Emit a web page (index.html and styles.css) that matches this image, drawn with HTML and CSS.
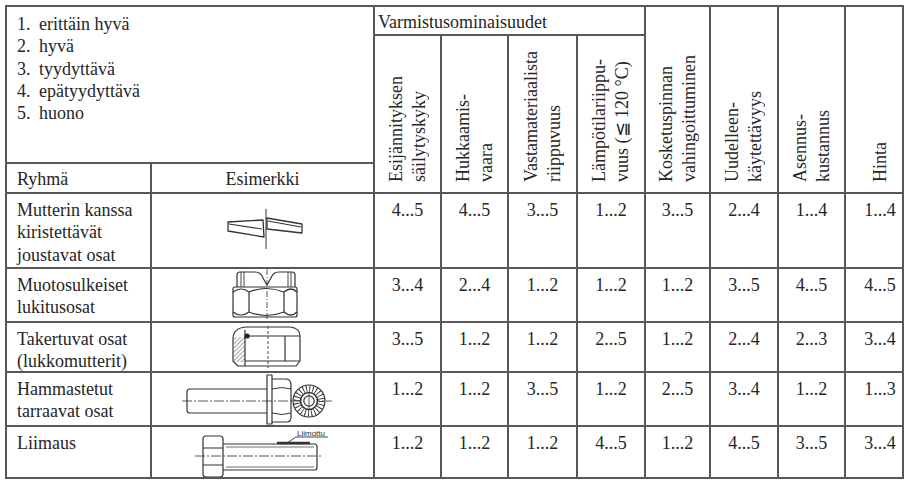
FILE: index.html
```html
<!DOCTYPE html>
<html lang="fi">
<head>
<meta charset="utf-8">
<title>Varmistusominaisuudet</title>
<link rel="stylesheet" href="styles.css">
</head>
<body>
<div class="sheet">
  <div class="cell legend">
    <div><span class="num">1.</span>erittäin hyvä</div>
    <div><span class="num">2.</span>hyvä</div>
    <div><span class="num">3.</span>tyydyttävä</div>
    <div><span class="num">4.</span>epätyydyttävä</div>
    <div><span class="num">5.</span>huono</div>
  </div>
  <div class="cell group">Varmistusominaisuudet</div>
  <div class="cell vh vh-a c3"><span class="rot">Esijännityksen<br>säilytyskyky</span></div>
  <div class="cell vh vh-a c4"><span class="rot">Hukkaamis-<br>vaara</span></div>
  <div class="cell vh vh-a c5"><span class="rot">Vastamateriaalista<br>riippuvuus</span></div>
  <div class="cell vh vh-a c6"><span class="rot">Lämpötilariippu-<br>vuus (≦ 120 °C)</span></div>
  <div class="cell vh vh-b c7"><span class="rot">Kosketuspinnan<br>vahingoittuminen</span></div>
  <div class="cell vh vh-b c8"><span class="rot">Uudelleen-<br>käytettävyys</span></div>
  <div class="cell vh vh-b c9"><span class="rot">Asennus-<br>kustannus</span></div>
  <div class="cell vh vh-b c10 last"><span class="rot">Hinta</span></div>
  <div class="cell head-ryhma">Ryhmä</div>
  <div class="cell head-esim">Esimerkki</div>

  <!-- Row 1 -->
  <div class="cell name">Mutterin kanssa<br>kiristettävät<br>joustavat osat</div>
  <div class="cell ex">
    <svg viewBox="152 194 221 73" preserveAspectRatio="none">
      <g fill="none" stroke="#333" stroke-width="1.3" stroke-linejoin="round">
        <path d="M228,222 L263,220 L264,237 L228,231 Z"/>
        <path d="M229,224 L262,229" stroke-width="1.1"/>
        <path d="M267,218 L302,224 L302,233 L267,229 Z"/>
        <path d="M268,221 L301,227" stroke-width="1.1"/>
        <path d="M266,209 V249" stroke-width="1"/>
      </g>
    </svg>
  </div>
  <div class="cell val">4...5</div>
  <div class="cell val">4...5</div>
  <div class="cell val">3...5</div>
  <div class="cell val">1...2</div>
  <div class="cell val">3...5</div>
  <div class="cell val">2...4</div>
  <div class="cell val">1...4</div>
  <div class="cell val last">1...4</div>

  <!-- Row 2 -->
  <div class="cell name">Muotosulkeiset<br>lukitusosat</div>
  <div class="cell ex">
    <svg viewBox="152 269 221 52" preserveAspectRatio="none">
      <g fill="none" stroke="#333" stroke-width="1.2" stroke-linejoin="round">
        <path d="M237,287 L237,275 Q237,272 240,272 L255,272 Q261,272 263,278 L267,285 L271,278 Q273,272 279,272 L292,272 Q295,272 295,275 L295,287"/>
        <path d="M241,272 V287 M244,272 V287 M288,272 V287 M291,272 V287" stroke-width="0.9"/>
        <path d="M233,289 Q233,287 235,287 L295,287 Q297,287 297,289 L297,315 Q297,317 295,317 L235,317 Q233,317 233,315 Z"/>
        <path d="M233,292 Q241,286 249,292 Q266,285 284,292 Q291,286 297,292 M233,312 Q241,318 249,312 Q266,319 284,312 Q291,318 297,312 M249,292 V312 M284,292 V312"/>
        <path d="M267,269 V321" stroke-width="0.8" stroke-dasharray="6 2 1 2"/>
      </g>
    </svg>
  </div>
  <div class="cell val">3...4</div>
  <div class="cell val">2...4</div>
  <div class="cell val">1...2</div>
  <div class="cell val">1...2</div>
  <div class="cell val">1...2</div>
  <div class="cell val">3...5</div>
  <div class="cell val">4...5</div>
  <div class="cell val last">4...5</div>

  <!-- Row 3 -->
  <div class="cell name">Takertuvat osat<br>(lukkomutterit)</div>
  <div class="cell ex">
    <svg viewBox="152 323 221 48" preserveAspectRatio="none">
      <defs>
        <pattern id="hatch" width="3" height="3" patternUnits="userSpaceOnUse" patternTransform="rotate(45)">
          <line x1="0" y1="0" x2="0" y2="3" stroke="#333" stroke-width="0.9"/>
        </pattern>
      </defs>
      <rect x="234" y="337" width="11" height="25" fill="url(#hatch)"/>
      <g fill="none" stroke="#333" stroke-width="1.2" stroke-linejoin="round">
        <path d="M238,366 L233,361 L233,339 Q233,328 246,327 L290,327 Q300,328 300,336 L300,361 L296,366 Z"/>
        <path d="M245,336 H300 M245,330 V366 M245,361 H300 M285,336 V361"/>
        <path d="M268,326 V368" stroke-width="0.9" stroke-dasharray="3 2"/>
      </g>
      <circle cx="247" cy="336" r="2.6" fill="#222"/>
    </svg>
  </div>
  <div class="cell val">3...5</div>
  <div class="cell val">1...2</div>
  <div class="cell val">1...2</div>
  <div class="cell val">2...5</div>
  <div class="cell val">1...2</div>
  <div class="cell val">2...4</div>
  <div class="cell val">2...3</div>
  <div class="cell val last">3...4</div>

  <!-- Row 4 -->
  <div class="cell name">Hammastetut<br>tarraavat osat</div>
  <div class="cell ex">
    <svg viewBox="152 373 221 52" preserveAspectRatio="none">
      <g fill="none" stroke="#333" stroke-width="1.2" stroke-linejoin="round">
        <path d="M267,389 H190 Q187,389 187,392 V410 Q187,413 190,413 H267"/>
        <path d="M267,375 H272 V424 H267 Z"/>
        <path d="M272,379 H287 Q291,380 291,385 V417 Q291,422 287,422 H272"/>
        <path d="M272,389 Q282,386 291,389 M272,413 Q282,416 291,413" stroke-width="1"/>
        <path d="M182,401 H332" stroke-width="0.8" stroke-dasharray="10 2 2 2"/>
        <circle cx="309" cy="401" r="16"/>
        <circle cx="309" cy="401" r="12.3" stroke-width="6.4" stroke-dasharray="0.9 2.32"/>
        <circle cx="309" cy="401" r="8.5" stroke-width="1.6" fill="#fff"/>
        <circle cx="309" cy="401" r="5.2"/>
        <path d="M309,393 V409" stroke-width="0.8"/>
      </g>
    </svg>
  </div>
  <div class="cell val">1...2</div>
  <div class="cell val">1...2</div>
  <div class="cell val">3...5</div>
  <div class="cell val">1...2</div>
  <div class="cell val">2...5</div>
  <div class="cell val">3...4</div>
  <div class="cell val">1...2</div>
  <div class="cell val last">1...3</div>

  <!-- Row 5 -->
  <div class="cell name">Liimaus</div>
  <div class="cell ex">
    <svg viewBox="152 427 221 50" preserveAspectRatio="none">
      <g fill="none" stroke="#333" stroke-width="1.2" stroke-linejoin="round">
        <path d="M206,436 H220 Q223,436 223,439 V474 Q223,477 220,477 H206 Q203,477 203,474 V439 Q203,436 206,436 Z"/>
        <path d="M203,448 H223 M203,465 H223"/>
        <path d="M223,444 H315 Q317,444 317,447 V467 Q317,470 315,470 H223"/>
        <path d="M226,447 H314 M226,467 H314" stroke-width="0.7"/>
        <path d="M277,443 H310" stroke-width="2.4"/>
        <path d="M195,456 H322" stroke-width="0.8" stroke-dasharray="10 2 2 2"/>
        <path d="M296,437 H328 M296,437 L287,443" stroke-width="0.9"/>
      </g>
      <text x="297" y="435.5" class="tag">Liimottu</text>
    </svg>
  </div>
  <div class="cell val">1...2</div>
  <div class="cell val">1...2</div>
  <div class="cell val">1...2</div>
  <div class="cell val">4...5</div>
  <div class="cell val">1...2</div>
  <div class="cell val">4...5</div>
  <div class="cell val">3...5</div>
  <div class="cell val last">3...4</div>
</div>
</body>
</html>
```

FILE: styles.css
```css
* {
  box-sizing: border-box;
}

body {
  margin: 0;
  background: #fff;
  color: #262626;
  font-family: "Liberation Serif", serif;
}

.sheet {
  display: grid;
  grid-template-columns: 143px 221px 65px 65px 67px 66px 63px 66px 65px 56px;
  grid-template-rows: 27px 126px 28px 73px 52px 48px 52px 50px;
  gap: 2px;
  padding: 2px;
  margin: 5px 0 0 5px;
  width: max-content;
  background: #575757;
  font-family: "Liberation Serif", serif;
  font-size: 18px;
  line-height: 22.3px;
}

.cell {
  background: #fff;
  overflow: hidden;
}

.legend {
  grid-column: 1 / 3;
  grid-row: 1 / 3;
  padding: 6px 10px;
}

.legend .num {
  display: inline-block;
  width: 22px;
}

.group {
  grid-column: 3 / 7;
  grid-row: 1;
  padding: 4px 3px 0;
  line-height: 22px;
  white-space: nowrap;
}

.vh {
  display: flex;
  justify-content: center;
  align-items: flex-end;
  padding-bottom: 10px;
}

.vh-a { grid-row: 2 / 4; }
.vh-b { grid-row: 1 / 4; }

.c3 { grid-column: 3; }
.c4 { grid-column: 4; }
.c5 { grid-column: 5; }
.c6 { grid-column: 6; }
.c7 { grid-column: 7; }
.c8 { grid-column: 8; }
.c9 { grid-column: 9; }
.c10 { grid-column: 10; }

.rot {
  writing-mode: vertical-rl;
  transform: rotate(180deg);
  line-height: 23px;
  white-space: nowrap;
}

.head-ryhma {
  grid-column: 1;
  grid-row: 3;
  padding: 4px 10px 0;
}

.head-esim {
  grid-column: 2;
  grid-row: 3;
  padding-top: 4px;
  text-align: center;
}

.name {
  padding: 5px 10px 0;
  white-space: nowrap;
}

.ex svg {
  display: block;
  width: 100%;
  height: 100%;
}

.tag {
  font-family: "Liberation Sans", Arial, sans-serif;
  font-size: 8px;
  fill: #333;
}

.val {
  text-align: center;
  padding-top: 5px;
}

.last {
  padding-left: 12px;
}
```
